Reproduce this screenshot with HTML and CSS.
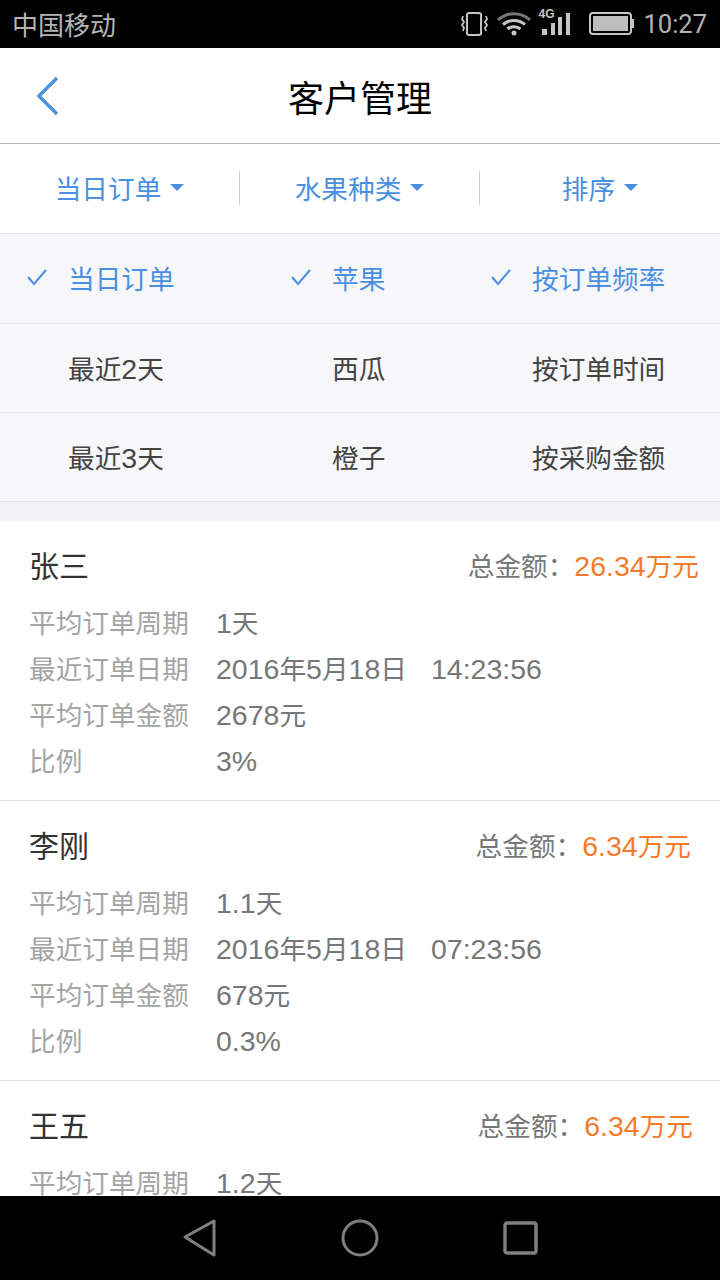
FILE: index.html
```html
<!DOCTYPE HTML>
<html>
<head>
    <meta charset="utf-8">
    <meta name="viewport" content="width=device-width, initial-scale=1">
    <link rel="stylesheet" href="styles.css">
</head>
<body>
    <div class="screen">
        <div class="status-bar">
            <span class="carrier">中国移动</span>
            <div class="status-icons">
                <svg class="icon-vibrate" width="28" height="24" viewBox="0 0 28 24" fill="none" stroke="#c4c4c4">
                    <rect x="6" y="1" width="14" height="22" rx="2" stroke-width="2"/>
                    <path d="M2 4l-1 3 2 3-2 3 2 3-1 3" stroke-width="1.8"/>
                    <path d="M25 4l1 3-2 3 2 3-2 3 1 3" stroke-width="1.8"/>
                </svg>
                <svg class="icon-wifi" width="34" height="24" viewBox="0 0 34 24" fill="none" stroke="#c4c4c4" stroke-width="3">
                    <path d="M1 8C10-.5 24-.5 33 8" stroke="#777"/>
                    <path d="M6 12.5C12.5 7 21.5 7 28 12.5"/>
                    <path d="M10.5 17C14 14 20 14 23.5 17"/>
                    <circle cx="17" cy="21" r="2.5" fill="#c4c4c4" stroke="none"/>
                </svg>
                <div class="signal">
                    <span class="signal-type">4G</span>
                    <svg width="32" height="24" viewBox="0 0 32 24" fill="#c4c4c4">
                        <rect x="3" y="17" width="5" height="6"/>
                        <rect x="12" y="11" width="4" height="12"/>
                        <rect x="19" y="5" width="4" height="18"/>
                        <rect x="27" y="1" width="4" height="22"/>
                    </svg>
                </div>
                <svg class="icon-battery" width="46" height="24" viewBox="0 0 46 24" fill="none">
                    <rect x="1" y="1" width="41" height="21" rx="3" stroke="#c4c4c4" stroke-width="2"/>
                    <rect x="4" y="4" width="35" height="15" fill="#bdbdbd"/>
                    <rect x="43" y="7" width="2" height="9" fill="#c4c4c4"/>
                </svg>
                <span class="clock">10:27</span>
            </div>
        </div>

        <div class="header">
            <svg class="back" width="24" height="42" viewBox="0 0 24 42" fill="none" stroke="#4a90e2" stroke-width="3.4">
                <path d="M22 2L4 20l18 18"/>
            </svg>
            <h1>客户管理</h1>
        </div>

        <div class="tabs">
            <div class="tab"><span>当日订单</span><i class="caret"></i></div>
            <div class="tab"><span>水果种类</span><i class="caret"></i></div>
            <div class="tab"><span>排序</span><i class="caret"></i></div>
        </div>

        <div class="filter">
            <div class="filter-row">
                <div class="option selected"><svg class="check" width="20" height="18" viewBox="0 0 20 18" fill="none" stroke="#4a90e2" stroke-width="2"><path d="M1 9l6 7L19 2"/></svg>当日订单</div>
                <div class="option selected"><svg class="check" width="20" height="18" viewBox="0 0 20 18" fill="none" stroke="#4a90e2" stroke-width="2"><path d="M1 9l6 7L19 2"/></svg>苹果</div>
                <div class="option selected"><svg class="check" width="20" height="18" viewBox="0 0 20 18" fill="none" stroke="#4a90e2" stroke-width="2"><path d="M1 9l6 7L19 2"/></svg>按订单频率</div>
            </div>
            <div class="filter-row">
                <div class="option">最近<span class="num">2</span>天</div>
                <div class="option">西瓜</div>
                <div class="option">按订单时间</div>
            </div>
            <div class="filter-row">
                <div class="option">最近<span class="num">3</span>天</div>
                <div class="option">橙子</div>
                <div class="option">按采购金额</div>
            </div>
        </div>

        <div class="gap"></div>

        <div class="customers">
            <div class="customer">
                <div class="customer-top">
                    <span class="name">张三</span>
                    <span class="total total-first">总金额：<em><span class="num">26.34</span>万元</em></span>
                </div>
                <div class="line"><span class="label">平均订单周期</span><span class="value"><span class="num">1</span>天</span></div>
                <div class="line"><span class="label">最近订单日期</span><span class="value"><span class="num">2016</span>年<span class="num">5</span>月<span class="num">18</span>日<span class="num time">14:23:56</span></span></div>
                <div class="line"><span class="label">平均订单金额</span><span class="value"><span class="num">2678</span>元</span></div>
                <div class="line"><span class="label">比例</span><span class="value"><span class="num">3%</span></span></div>
            </div>
            <div class="customer">
                <div class="customer-top">
                    <span class="name">李刚</span>
                    <span class="total">总金额：<em><span class="num">6.34</span>万元</em></span>
                </div>
                <div class="line"><span class="label">平均订单周期</span><span class="value"><span class="num">1.1</span>天</span></div>
                <div class="line"><span class="label">最近订单日期</span><span class="value"><span class="num">2016</span>年<span class="num">5</span>月<span class="num">18</span>日<span class="num time">07:23:56</span></span></div>
                <div class="line"><span class="label">平均订单金额</span><span class="value"><span class="num">678</span>元</span></div>
                <div class="line"><span class="label">比例</span><span class="value"><span class="num">0.3%</span></span></div>
            </div>
            <div class="customer">
                <div class="customer-top">
                    <span class="name">王五</span>
                    <span class="total total-third">总金额：<em><span class="num">6.34</span>万元</em></span>
                </div>
                <div class="line"><span class="label">平均订单周期</span><span class="value"><span class="num">1.2</span>天</span></div>
            </div>
        </div>

        <div class="nav-bar">
            <div class="nav-item"><svg width="36" height="40" viewBox="0 0 36 40" fill="none" stroke="#808080" stroke-width="3" stroke-linejoin="round"><path d="M3 19L32 3v34z"/></svg></div>
            <div class="nav-item"><svg width="40" height="40" viewBox="0 0 40 40" fill="none" stroke="#808080" stroke-width="3"><circle cx="20" cy="20" r="17"/></svg></div>
            <div class="nav-item"><svg width="36" height="36" viewBox="0 0 36 36" fill="none" stroke="#808080" stroke-width="3.4"><rect x="3" y="3" width="31" height="30" rx="2"/></svg></div>
        </div>
    </div>
</body>
</html>
```

FILE: styles.css
```css
* {
    box-sizing: border-box;
}

body {
    font-family: "Liberation Sans", "Noto Sans CJK SC", sans-serif;
    background-color: #ffffff;
    margin: 0;
    padding: 0;
}

.screen {
    display: flex;
    flex-direction: column;
    width: 720px;
    height: 1280px;
    overflow: hidden;
}

.num {
    font-size: 28.5px;
}

.status-bar {
    display: flex;
    align-items: center;
    justify-content: space-between;
    flex: none;
    height: 48px;
    padding: 0 13px 0 12px;
    background-color: #000000;
    color: #b4b4b4;
}

.carrier {
    font-size: 26px;
    margin-bottom: 2px;
}

.status-icons {
    display: flex;
    align-items: center;
}

.icon-vibrate {
    margin-right: 8px;
}

.icon-wifi {
    margin-right: 8px;
}

.signal {
    position: relative;
    margin-right: 18px;
}

.signal svg {
    display: block;
}

.signal-type {
    position: absolute;
    left: -1px;
    top: -5px;
    font-size: 12px;
    font-weight: bold;
    color: #c4c4c4;
}

.icon-battery {
    margin-right: 8px;
}

.clock {
    font-family: Roboto, sans-serif;
    font-size: 25.5px;
}

.header {
    position: relative;
    display: flex;
    align-items: center;
    justify-content: center;
    flex: none;
    height: 96px;
    background-color: #ffffff;
    border-bottom: 1px solid #b4b4b4;
}

.header h1 {
    margin: 0;
    font-size: 36px;
    font-weight: normal;
    color: #000000;
}

.back {
    position: absolute;
    left: 35px;
    top: 28px;
}

.tabs {
    display: flex;
    align-items: center;
    flex: none;
    height: 90px;
    padding-bottom: 2px;
    background-color: #ffffff;
    border-bottom: 1px solid #e4e4e6;
}

.tab {
    display: flex;
    align-items: center;
    justify-content: center;
    gap: 9px;
    width: 240px;
    height: 34px;
    font-size: 26.67px;
    color: #4a90e2;
    border-left: 1px solid #cfcfcf;
}

.tab:first-child {
    width: 239px;
    border-left: none;
}

.tab:last-child {
    width: 241px;
}

.caret {
    width: 0;
    height: 0;
    border-left: 7px solid transparent;
    border-right: 7px solid transparent;
    border-top: 7px solid #4a90e2;
}

.filter {
    flex: none;
    background-color: #f7f6f9;
}

.filter-row {
    display: grid;
    grid-template-columns: 264px 200px 187px;
    align-items: center;
    height: 89px;
    padding: 0 0 2px 68px;
    border-bottom: 1px solid #e4e4e6;
}

.filter-row:first-child {
    height: 90px;
}

.option {
    position: relative;
    font-size: 26.67px;
    color: #444444;
}

.option.selected {
    color: #4a90e2;
}

.check {
    position: absolute;
    left: -41px;
    top: 10px;
}

.gap {
    flex: none;
    height: 19px;
    background-color: #f3f2f5;
}

.customers {
    flex: 1;
    min-height: 0;
    overflow: hidden;
    background-color: #ffffff;
}

.customer {
    height: 280px;
    padding: 18px 29px 0;
    border-bottom: 1px solid #e4e4e6;
}

.customer-top {
    display: flex;
    align-items: center;
    justify-content: space-between;
    height: 50px;
    margin-bottom: 11px;
}

.name {
    font-size: 30px;
    color: #333333;
}

.total {
    font-size: 26.67px;
    color: #777777;
}

.total-first {
    margin-right: -8px;
}

.total-third {
    margin-right: -2px;
}

.total em {
    font-style: normal;
    color: #f27c2c;
}

.line {
    display: flex;
    align-items: baseline;
    height: 46px;
    font-size: 26.67px;
    line-height: 46px;
}

.label {
    width: 187px;
    color: #a4a4a4;
}

.value {
    color: #777777;
}

.time {
    margin-left: 24px;
}

.nav-bar {
    display: flex;
    align-items: center;
    justify-content: center;
    flex: none;
    height: 84px;
    background-color: #000000;
}

.nav-item {
    display: flex;
    align-items: center;
    justify-content: center;
    width: 160px;
}
```
